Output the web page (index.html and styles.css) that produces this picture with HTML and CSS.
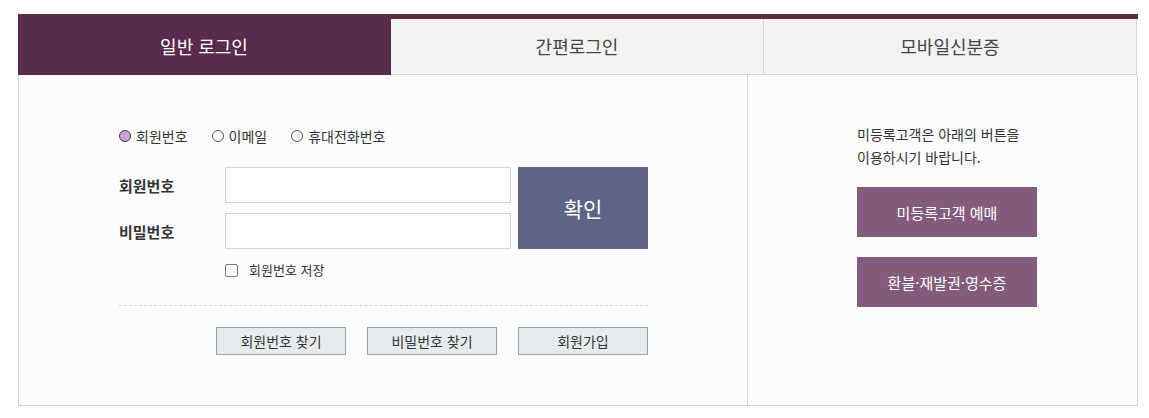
FILE: index.html
```html
<!DOCTYPE html>
<html lang="ko">
<head>
<meta charset="UTF-8">
<link rel="stylesheet" href="styles.css">
<title>로그인</title>
</head>
<body>

<div class="login-box">
  <ul class="tabs">
    <li class="tab active">일반 로그인</li>
    <li class="tab">간편로그인</li>
    <li class="tab">모바일신분증</li>
  </ul>

  <div class="panel">
    <div class="member">
      <div class="id-type">
        <label class="radio"><input type="radio" name="idType" checked> 회원번호</label>
        <label class="radio"><input type="radio" name="idType"> 이메일</label>
        <label class="radio"><input type="radio" name="idType"> 휴대전화번호</label>
      </div>

      <form class="login-form" onsubmit="return false">
        <label class="field-label" for="memberNo">회원번호</label>
        <input class="field" id="memberNo" type="text">
        <button class="confirm-button" type="submit">확인</button>
        <label class="field-label" for="password">비밀번호</label>
        <input class="field" id="password" type="password">
      </form>

      <label class="save-id"><input type="checkbox"> 회원번호 저장</label>

      <div class="links">
        <button class="link-button">회원번호 찾기</button>
        <button class="link-button">비밀번호 찾기</button>
        <button class="link-button">회원가입</button>
      </div>
    </div>

    <div class="guest">
      <p class="guest-text">미등록고객은 아래의 버튼을<br>이용하시기 바랍니다.</p>
      <button class="guest-button">미등록고객 예매</button>
      <button class="guest-button">환불·재발권·영수증</button>
    </div>
  </div>
</div>

</body>
</html>
```
FILE: styles.css
```css
html, body {margin: 0; padding: 0;}
body {font-family: 'Noto Sans CJK KR', 'Noto Sans', sans-serif; color: #333; background: #fff;}
button, input {font-family: inherit;}

.login-box {width: 1120px; margin: 14px 0 0 18px; border-top: 5px solid #5a2c4c;}

.tabs {display: flex; margin: 0; padding: 0; list-style: none;}
.tab {flex: 1; height: 55px; line-height: 55px; text-align: center; font-size: 18px;
  color: #444; background: #f3f3f3; border-bottom: 1px solid #d6d6d6; border-right: 1px solid #d6d6d6;}
.tab:last-child {margin-right: 1px;}
.tab.active {background: #5a2c4c; color: #fff; border-bottom-color: #5a2c4c; border-right-color: #5a2c4c;}

.panel {display: flex; height: 331px; background: #fcfcfc;
  border: 1px solid #d6d6d6; border-top: none; box-sizing: border-box;}

.member {width: 729px; border-right: 1px solid #d6d6d6; padding: 52px 0 0 100px; box-sizing: border-box;}

.id-type {display: flex; gap: 24px; font-size: 14px; line-height: 18px;}
.radio {display: flex; align-items: center; gap: 5px;}
.radio input {appearance: none; width: 12px; height: 12px; margin: 0; border: 1px solid #555;
  border-radius: 50%; background: #fff; box-sizing: border-box;}
.radio input:checked {background: #c7a1de; border-color: #444;}

.login-form {display: grid; grid-template-columns: 99px 286px 130px; grid-template-rows: 36px 36px;
  column-gap: 7px; row-gap: 10px; margin-top: 22px; align-items: center;}
.field-label {font-size: 15px; font-weight: bold; color: #333;}
.field {height: 36px; margin: 0; padding: 0 8px; border: 1px solid #d3d3d3; background: #fff;
  box-sizing: border-box; font-size: 14px;}
.confirm-button {grid-column: 3; grid-row: 1 / 3; height: 82px; border: none; background: #5d6584;
  color: #fff; font-size: 21px; cursor: pointer;}

.save-id {display: flex; align-items: center; gap: 11px; margin: 12px 0 0 106px; font-size: 13px;
  line-height: 18px; color: #333;}
.save-id input {appearance: none; width: 13px; height: 13px; margin: 0; border: 1px solid #777;
  border-radius: 2px; background: #fff; box-sizing: border-box;}

.links {display: flex; justify-content: flex-end; gap: 21px; width: 529px; margin-top: 26px;
  padding-top: 21px; border-top: 1px dashed #d6d6d6;}
.link-button {width: 130px; height: 28px; padding: 0; border: 1px solid #8fa5b5; background: #e6ebee;
  color: #333; font-size: 14px; cursor: pointer;}

.guest {flex: 1; padding: 48px 0 0 109px; box-sizing: border-box; display: flex; flex-direction: column;
  align-items: flex-start;}
.guest-text {margin: 0; font-size: 14px; line-height: 23px; color: #333;}
.guest-button {width: 180px; height: 50px; margin-top: 20px; border: none; background: #845b7b;
  color: #fff; font-size: 15px; cursor: pointer;}
.guest-text + .guest-button {margin-top: 18px;}
```
